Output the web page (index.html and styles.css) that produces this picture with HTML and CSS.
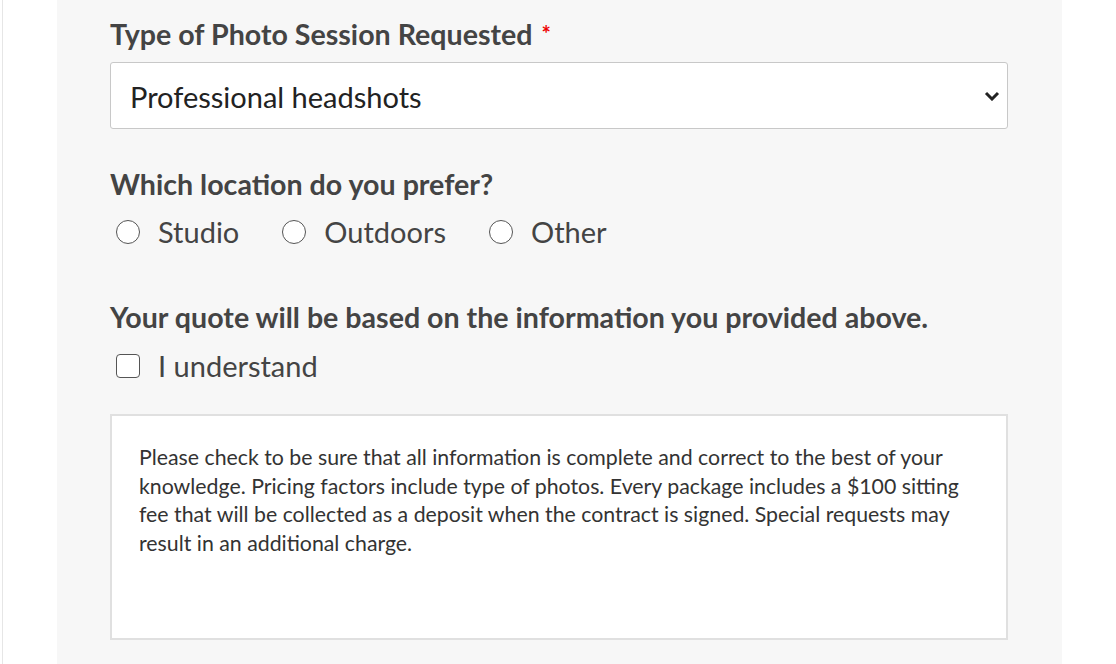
FILE: index.html
```html
<!DOCTYPE html>
<html>
<head>
<meta charset="utf-8">
<link rel="stylesheet" href="styles.css">
</head>
<body>
<div class="page">
  <div class="panel">
    <div class="field">
      <div class="label">Type of Photo Session Requested <span class="req">*</span></div>
      <div class="select">
        <span>Professional headshots</span>
        <svg class="chev" width="16" height="10" viewBox="0 0 16 10"><path d="M2 2 L8 8 L14 2" fill="none" stroke="#222" stroke-width="3"/></svg>
      </div>
    </div>
    <div class="field loc">
      <div class="label">Which location do you prefer?</div>
      <div class="options">
        <div class="opt"><span class="radio"></span>Studio</div>
        <div class="opt"><span class="radio"></span>Outdoors</div>
        <div class="opt"><span class="radio"></span>Other</div>
      </div>
    </div>
    <div class="field quote">
      <div class="label">Your quote will be based on the information you provided above.</div>
      <div class="opt"><span class="check"></span>I understand</div>
    </div>
    <div class="note">
      Please check to be sure that all information is complete and correct to the best of your knowledge. Pricing factors include type of photos. Every package includes a $100 sitting fee that will be collected as a deposit when the contract is signed. Special requests may result in an additional charge.
    </div>
  </div>
</div>
</body>
</html>
```
FILE: styles.css
```css
* { box-sizing: border-box; }
html, body { margin: 0; padding: 0; background: #fff; }
body { font-family: Lato, "Open Sans", sans-serif; }
.page {
  height: 664px;
  overflow: hidden;
  border-left: 1px solid #e6e6e6;
  margin-left: 2px;
  padding-left: 54px;
}
.panel {
  width: 1005px;
  height: 664px;
  background: #f7f7f7;
  padding: 17px 54px 0 53px;
}
.label {
  font-size: 28.6px;
  font-weight: 700;
  color: #444;
  line-height: 34px;
}
.req { color: #e00; font-size: 22px; vertical-align: top; margin-left: 2px; }
.select {
  margin-top: 11px;
  height: 67px;
  background: #fff;
  border: 1px solid #c8c8c8;
  border-radius: 3px;
  display: flex;
  align-items: center;
  justify-content: space-between;
  padding: 0 7px 0 19px;
  font-size: 29px;
  color: #222;
}
.select span { position: relative; top: 1px; }
.loc { margin-top: 38px; }
.options { display: flex; gap: 43px; margin-top: 13px; }
.opt {
  display: flex;
  align-items: center;
  font-size: 29px;
  color: #444;
  line-height: 36px;
  padding-left: 6px;
}
.options .opt + .opt { padding-left: 0; }
.radio {
  width: 24px; height: 24px;
  border: 1.5px solid #555;
  border-radius: 50%;
  background: #fff;
  margin-right: 18px;
}
.quote { margin-top: 50px; }
.quote .opt { margin-top: 14px; }
.check {
  width: 24px; height: 24px;
  border: 1.5px solid #555;
  border-radius: 4px;
  background: #fff;
  margin-right: 18px;
}
.note {
  margin-top: 30px;
  height: 226px;
  background: #fff;
  border: 2px solid #e0e0e0;
  padding: 27px 40px 0 27px;
  font-size: 21.3px;
  line-height: 28.5px;
  color: #333;
}
```
